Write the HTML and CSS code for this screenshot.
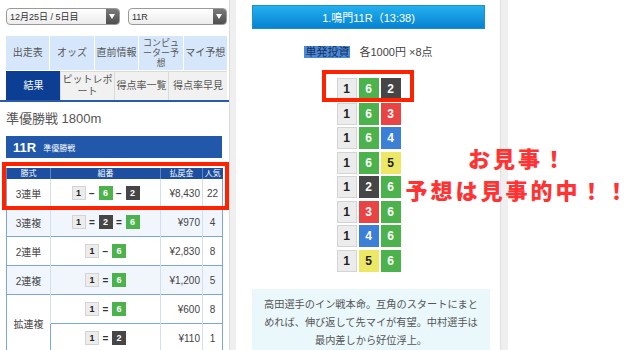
FILE: index.html
```html
<!DOCTYPE html>
<html lang="ja">
  <head>
    <meta charset="UTF-8" />
    <title>レース結果</title>
    <link rel="stylesheet" href="styles.css">
  </head>
  <body>
    <div class="page">
      <div class="left">
        <div class="selects">
          <div class="select sel-day"><span>12月25日 / 5日目</span><i class="arrow"></i></div>
          <div class="select sel-race"><span>11R</span><i class="arrow"></i></div>
        </div>
        <div class="tabs">
          <div class="tab-row row-a">
            <div class="tab">出走表</div>
            <div class="tab">オッズ</div>
            <div class="tab">直前情報</div>
            <div class="tab small">コンピュ<br>ーター予<br>想</div>
            <div class="tab">マイ予想</div>
          </div>
          <div class="tab-row row-b">
            <div class="tab active">結果</div>
            <div class="tab">ピットレポ<br>ート</div>
            <div class="tab">得点率一覧</div>
            <div class="tab">得点率早見</div>
          </div>
        </div>
        <div class="race-title">準優勝戦 1800m</div>
        <div class="race-bar"><b>11R</b><span>準優勝戦</span></div>
        <table class="result">
          <colgroup><col class="c1"><col class="c2"><col class="c3"><col class="c4"></colgroup>
          <thead>
            <tr><th>勝式</th><th>組番</th><th>払戻金</th><th>人気</th></tr>
          </thead>
          <tbody>
            <tr>
              <td>3連単</td>
              <td><span class="nb n1">1</span><span class="sep">−</span><span class="nb n6">6</span><span class="sep">−</span><span class="nb n2">2</span></td>
              <td class="yen">¥8,430</td><td>22</td>
            </tr>
            <tr class="alt">
              <td>3連複</td>
              <td><span class="nb n1">1</span><span class="sep">=</span><span class="nb n2">2</span><span class="sep">=</span><span class="nb n6">6</span></td>
              <td class="yen">¥970</td><td>4</td>
            </tr>
            <tr>
              <td>2連単</td>
              <td><span class="nb n1">1</span><span class="sep">−</span><span class="nb n6">6</span></td>
              <td class="yen">¥2,830</td><td>8</td>
            </tr>
            <tr class="alt">
              <td>2連複</td>
              <td><span class="nb n1">1</span><span class="sep">=</span><span class="nb n6">6</span></td>
              <td class="yen">¥1,200</td><td>5</td>
            </tr>
            <tr>
              <td rowspan="2" class="wide">拡連複</td>
              <td><span class="nb n1">1</span><span class="sep">=</span><span class="nb n6">6</span></td>
              <td class="yen">¥600</td><td>8</td>
            </tr>
            <tr>
              <td><span class="nb n1">1</span><span class="sep">=</span><span class="nb n2">2</span></td>
              <td class="yen">¥110</td><td>1</td>
            </tr>
          </tbody>
        </table>
        <div class="mark mark-left"></div>
      </div>
      <div class="gap"></div>
      <div class="center">
        <div class="race-btn">1.鳴門11R（13:38)</div>
        <div class="bet"><span class="bet-type">単発投資</span>各1000円 ×8点</div>
        <div class="picks">
          <span class="pk n1">1</span><span class="pk n6">6</span><span class="pk n2">2</span>
          <span class="pk n1">1</span><span class="pk n6">6</span><span class="pk n3">3</span>
          <span class="pk n1">1</span><span class="pk n6">6</span><span class="pk n4">4</span>
          <span class="pk n1">1</span><span class="pk n6">6</span><span class="pk n5">5</span>
          <span class="pk n1">1</span><span class="pk n2">2</span><span class="pk n6">6</span>
          <span class="pk n1">1</span><span class="pk n3">3</span><span class="pk n6">6</span>
          <span class="pk n1">1</span><span class="pk n4">4</span><span class="pk n6">6</span>
          <span class="pk n1">1</span><span class="pk n5">5</span><span class="pk n6">6</span>
        </div>
        <div class="comment">高田選手のイン戦本命。互角のスタートにまと<br>めれば、伸び返して先マイが有望。中村選手は<br>最内差しから好位浮上。</div>
        <div class="mark mark-center"></div>
      </div>
      <div class="strip"></div>
      <div class="right"></div>
      <div class="shout">お見事！<br>予想は見事的中！！</div>
    </div>
  </body>
</html>
```

FILE: styles.css
```css
body {
  margin: 0;
  font-family: "Liberation Sans", "Noto Sans CJK JP", sans-serif;
  color: #444;
  background-color: #fff;
}
.page {
  position: relative;
  display: flex;
  width: 640px;
  height: 350px;
  overflow: hidden;
}
.left {
  position: relative;
  width: 229px;
  flex: none;
  border-right: 1px solid #dcdcdc;
}
.gap {
  width: 6px;
  flex: none;
  background-color: #efefef;
}
.center {
  position: relative;
  width: 233px;
  flex: none;
  padding: 5px 15px 0 16px;
}
.strip {
  width: 7px;
  flex: none;
  background-color: #efefef;
  border-left: 1px solid #e0e0e0;
}
.right {
  flex: 1;
}

/* selects */
.selects {
  display: flex;
  gap: 8px;
  padding: 8px 2px 0 6px;
}
.select {
  display: flex;
  align-items: center;
  height: 15px;
  border: 1px solid #9a9a9a;
  border-radius: 4px;
  background: linear-gradient(#fff, #ececec);
  font-size: 9px;
  color: #333;
  overflow: hidden;
}
.select span {
  flex: 1;
  padding-left: 3px;
}
.sel-day {
  width: 112px;
}
.sel-race {
  width: 97px;
}
.arrow {
  position: relative;
  width: 13px;
  height: 100%;
  background: linear-gradient(#7a7a7a, #4e4e4e);
}
.arrow::after {
  content: "";
  position: absolute;
  left: 3px;
  top: 5px;
  border-left: 3.5px solid transparent;
  border-right: 3.5px solid transparent;
  border-top: 5px solid #fff;
}

/* tabs */
.tabs {
  margin-top: 11px;
  padding: 0 2px 0 6px;
  border-bottom: 2px solid #2a5ba8;
}
.tab-row {
  display: grid;
  gap: 1px;
}
.row-a {
  grid-template-columns: repeat(5, 1fr);
  height: 34px;
}
.row-b {
  grid-template-columns: 54px 54px 54px 1fr;
  height: 29px;
  margin-top: 1px;
  gap: 0;
}
.tab {
  display: flex;
  align-items: center;
  justify-content: center;
  text-align: center;
  font-size: 10px;
  line-height: 12px;
  color: #555;
}
.row-a .tab {
  background-color: #d7e7fb;
}
.row-a .tab.small {
  font-size: 9px;
  line-height: 10px;
}
.row-b .tab {
  background-color: #f1f1f1;
  border-left: 1px solid #dadada;
  border-top: 1px solid #dadada;
}
.row-b .tab.active {
  background-color: #0c3f93;
  color: #fff;
  border-color: #0c3f93;
}

/* race header */
.race-title {
  margin: 9px 6px 0;
  font-size: 13px;
  line-height: 16px;
  color: #555;
}
.race-bar {
  display: flex;
  align-items: center;
  gap: 7px;
  height: 22px;
  margin: 9px 7px 0 6px;
  padding-left: 7px;
  background-color: #2158a9;
  color: #fff;
}
.race-bar b {
  font-size: 13px;
}
.race-bar span {
  font-size: 8px;
}

/* result table */
.result {
  width: 216px;
  margin: 10px 0 0 6px;
  border-collapse: collapse;
  table-layout: fixed;
  font-size: 10px;
  color: #444;
}
.c1 { width: 44px; }
.c2 { width: 110px; }
.c3 { width: 42px; }
.c4 { width: 20px; }
.result th {
  height: 11px;
  padding: 0;
  background-color: #1d4e9f;
  color: #fff;
  font-size: 8px;
  font-weight: normal;
  border-left: 1px solid #5c85c4;
  line-height: 11px;
}
.result td {
  height: 28px;
  padding: 0;
  text-align: center;
  border-top: 1px solid #7ea5dc;
  border-left: 1px solid #d3dfee;
}
.result td:first-child,
.result td.wide {
  border-left: 1px solid #7ea5dc;
}
.result tr td:last-child {
  border-right: 1px solid #7ea5dc;
}
.result tbody tr:first-child td {
  border-top: none;
}
.result tr.alt td {
  background-color: #f1f6fd;
}
.result td.yen {
  text-align: right;
  padding-right: 2px;
}
.nb {
  display: inline-block;
  width: 14px;
  height: 14px;
  line-height: 14px;
  font-size: 9px;
  font-weight: bold;
  text-align: center;
  vertical-align: middle;
}
.sep {
  display: inline-block;
  width: 13px;
  font-size: 10px;
  font-weight: bold;
  color: #333;
  vertical-align: middle;
}

/* number colours */
.n1 { background-color: #ececec; color: #222; box-shadow: inset 0 0 0 1px #d4d4d4; }
.n2 { background-color: #464646; color: #fff; }
.n3 { background-color: #e84444; color: #fff; }
.n4 { background-color: #3b7fd6; color: #fff; }
.n5 { background-color: #ece866; color: #222; }
.n6 { background-color: #4cb34c; color: #fff; }

/* center panel */
.race-btn {
  height: 24px;
  line-height: 24px;
  text-align: center;
  font-size: 11px;
  color: #fff;
  background: linear-gradient(#22b1ef, #0782d0);
  border: 1px solid #1a8fd6;
  box-sizing: border-box;
}
.bet {
  margin-top: 17px;
  text-align: center;
  font-size: 11px;
  line-height: 13px;
  color: #444;
}
.bet-type {
  margin-right: 9px;
  padding: 0 1px;
  background-color: #4a89d9;
  color: #1a3157;
}
.picks {
  display: grid;
  grid-template-columns: repeat(3, 20px);
  grid-auto-rows: 22px;
  column-gap: 2px;
  row-gap: 2.5px;
  justify-content: center;
  margin-top: 19px;
}
.pk {
  display: flex;
  align-items: center;
  justify-content: center;
  font-size: 12px;
  font-weight: bold;
}
.comment {
  margin: 17px -5px 0 0;
  padding: 7px 0 8px;
  background-color: #eaf8fb;
  text-align: center;
  font-size: 10.2px;
  line-height: 18px;
  color: #555;
}

/* red marks */
.mark {
  position: absolute;
  border: 4px solid #ff2200;
}
.mark-left {
  left: 2px;
  top: 162px;
  width: 219px;
  height: 40px;
}
.mark-center {
  left: 86px;
  top: 70px;
  width: 84px;
  height: 24px;
}
.shout {
  position: absolute;
  left: 398px;
  top: 141px;
  width: 240px;
  text-align: center;
  font-family: "Noto Sans CJK JP", sans-serif;
  font-weight: 900;
  font-size: 22px;
  line-height: 32px;
  letter-spacing: 3px;
  color: #ff3333;
}
```
